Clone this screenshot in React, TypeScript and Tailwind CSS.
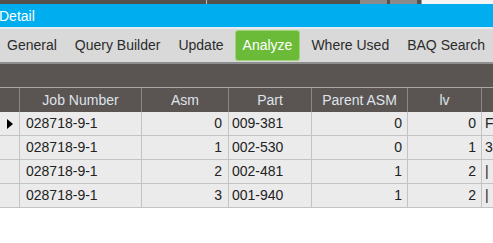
const tabs = ["General", "Query Builder", "Update", "Analyze", "Where Used", "BAQ Search"];

const rows = [
  { job: "028718-9-1", asm: 0, part: "009-381", parent: 0, lv: 0, extra: "F", current: true },
  { job: "028718-9-1", asm: 1, part: "002-530", parent: 0, lv: 1, extra: "3", current: false },
  { job: "028718-9-1", asm: 2, part: "002-481", parent: 1, lv: 2, extra: "|", current: false },
  { job: "028718-9-1", asm: 3, part: "001-940", parent: 1, lv: 2, extra: "|", current: false },
];

const cols = "grid grid-cols-[20px_122px_87px_83px_96px_74px_1fr]";

export default function App() {
  return (
    <div className="w-[493px] h-[243px] overflow-hidden bg-white font-['Liberation_Sans',Arial,sans-serif] text-[14px]">
      {/* strip of the window above */}
      <div className="flex h-[4px] bg-[#56514e]">
        <div className="w-[206px]" />
        <div className="w-px bg-[#bdbdbd]" />
        <div className="w-[153px]" />
        <div className="w-[27px] bg-[#8c8a89]" />
        <div className="w-[3px]" />
        <div className="w-[27px] bg-[#8c8a89]" />
        <div className="w-[4px]" />
        <div className="flex-1 bg-[#f4f4f4] border-l border-[#9a9a9a]" />
      </div>

      <div className="flex h-[23px] items-center bg-[#00aeef] text-white leading-none">
        <span className="-ml-px">Detail</span>
      </div>
      <div className="h-[2px] bg-[#e3ecf1]" />

      <div className="flex h-[33px] items-center gap-[4px] bg-[#d9d9d9] text-[#2b2b2b] whitespace-nowrap">
        {tabs.map((t) =>
          t === "Analyze" ? (
            <div
              key={t}
              className="shrink-0 h-[31px] flex items-center px-[7px] rounded-[3px] bg-[#6cbb38] border border-[#9fd67d] text-white"
            >
              {t}
            </div>
          ) : (
            <div key={t} className="shrink-0 px-[7px] flex items-center">
              {t}
            </div>
          )
        )}
      </div>
      <div className="h-[2px] bg-[#8f8f8f]" />

      <div className="h-[23px] bg-[#5a5552]" />
      <div className="h-px bg-[#a9a6a4]" />

      <div className={`${cols} h-[24px] bg-[#5a5552] text-[#dfe3ea]`}>
        {["", "Job Number", "Asm", "Part", "Parent ASM", "lv", ""].map((h, i) => (
          <div key={i} className="flex items-center justify-center border-r border-[#8d8885] last:border-r-0">
            {h}
          </div>
        ))}
      </div>

      {rows.map((r, i) => (
        <div key={i} className={`${cols} h-[24px] bg-[#ebebeb] text-[#222] border-b border-[#c3c3c3]`}>
          <div className="flex items-center justify-center border-r border-[#c3c3c3]">
            {r.current && (
              <svg width="6" height="10" viewBox="0 0 6 10">
                <path d="M0 0 L6 5 L0 10 Z" fill="#000" />
              </svg>
            )}
          </div>
          <div className="flex items-center pl-[6px] border-r border-[#c3c3c3]">{r.job}</div>
          <div className="flex items-center justify-end pr-[6px] border-r border-[#c3c3c3]">{r.asm}</div>
          <div className="flex items-center pl-[3px] border-r border-[#c3c3c3]">{r.part}</div>
          <div className="flex items-center justify-end pr-[5px] border-r border-[#c3c3c3]">{r.parent}</div>
          <div className="flex items-center justify-end pr-[5px] border-r border-[#c3c3c3]">{r.lv}</div>
          <div className="flex items-center pl-[3px]">{r.extra}</div>
        </div>
      ))}
    </div>
  );
}
